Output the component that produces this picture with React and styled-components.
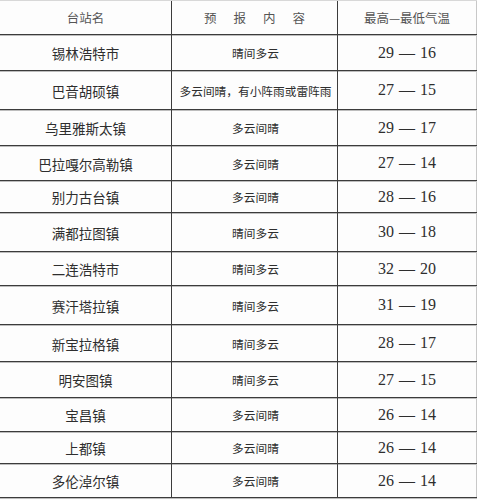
import React from 'react'
import styled, { createGlobalStyle } from 'styled-components'

const GlobalStyle = createGlobalStyle`
  body {
    margin: 0;
    background: #fff;
  }
`

const Table = styled.div`
  width: 477px;
  height: 500px;
  background: #fdfdfd;
  border-top: 1px solid #d8d8d8;
  box-sizing: border-box;
  display: flex;
  flex-direction: column;
  overflow: hidden;
`

const Row = styled.div`
  display: grid;
  grid-template-columns: 172px 166px 1fr;
  height: ${(p) => p.$h}px;
  box-sizing: border-box;
  border-bottom: 1px solid #3c3c3c;
  box-shadow: 0 1px 0 #bdbdbd;
  flex-shrink: 0;
`

const Cell = styled.div`
  display: flex;
  align-items: center;
  justify-content: center;
  border-right: ${(p) => (p.$last ? '1px solid #c8c8c8' : '1px solid #3c3c3c')};
  color: #2e2e2e;
  white-space: nowrap;
`

const Station = styled(Cell)`
  font-family: "Noto Sans CJK SC", "Noto Sans", sans-serif;
  font-size: 13.5px;
  padding-top: 1px;
`

const Forecast = styled(Cell)`
  font-family: "Noto Sans CJK SC", "Noto Sans", sans-serif;
  font-size: 11.7px;
  padding-left: 2px;
`

const Temp = styled(Cell)`
  font-family: "Liberation Serif", "Times New Roman", serif;
  font-size: 16px;
  word-spacing: 1px;
`

const HeadCell = styled(Cell)`
  font-family: "Noto Sans CJK SC", "Noto Sans", sans-serif;
  font-size: 12.5px;
  color: #555;
  letter-spacing: ${(p) => p.$spread || 0}px;
  padding-left: ${(p) => p.$spread || 0}px;
`

const rows = [
  ['锡林浩特市', '晴间多云', 29, 16, 36],
  ['巴音胡硕镇', '多云间晴，有小阵雨或雷阵雨', 27, 15, 39],
  ['乌里雅斯太镇', '多云间晴', 29, 17, 36],
  ['巴拉嘎尔高勒镇', '多云间晴', 27, 14, 35],
  ['别力古台镇', '多云间晴', 28, 16, 32],
  ['满都拉图镇', '晴间多云', 30, 18, 39],
  ['二连浩特市', '晴间多云', 32, 20, 34],
  ['赛汗塔拉镇', '晴间多云', 31, 19, 39],
  ['新宝拉格镇', '晴间多云', 28, 17, 37],
  ['明安图镇', '晴间多云', 27, 15, 36],
  ['宝昌镇', '多云间晴', 26, 14, 34],
  ['上都镇', '多云间晴', 26, 14, 32],
  ['多伦淖尔镇', '多云间晴', 26, 14, 34],
]

export default function App() {
  return (
    <>
      <GlobalStyle />
      <Table>
        <Row $h={34}>
          <HeadCell>台站名</HeadCell>
          <HeadCell $spread={17}>预报内容</HeadCell>
          <HeadCell $last>最高—最低气温</HeadCell>
        </Row>
        {rows.map(([name, text, hi, lo, h]) => (
          <Row key={name} $h={h}>
            <Station>{name}</Station>
            <Forecast>{text}</Forecast>
            <Temp $last>{hi} — {lo}</Temp>
          </Row>
        ))}
      </Table>
    </>
  )
}
